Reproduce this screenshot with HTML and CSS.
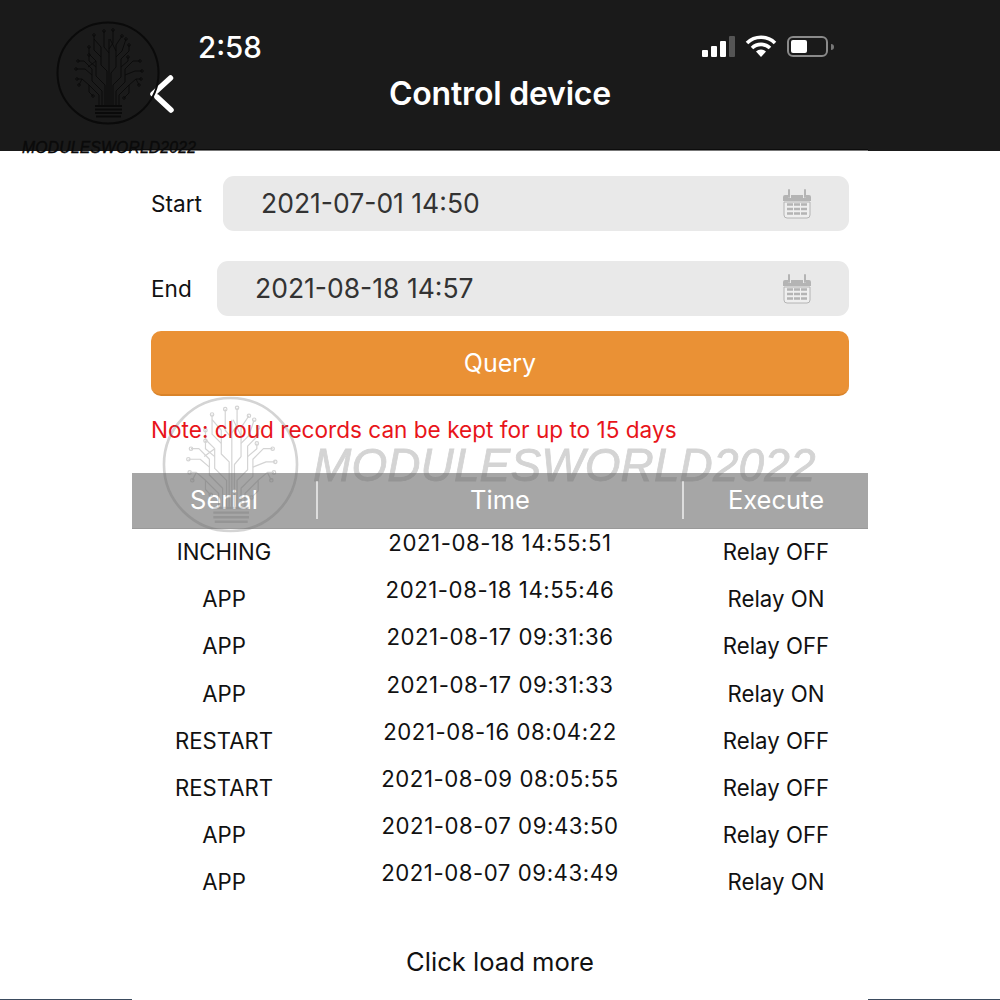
FILE: index.html
```html
<!DOCTYPE html>
<html lang="en">
<head>
<meta charset="utf-8">
<title>Control device</title>
<link rel="stylesheet" href="styles.css">
</head>
<body>
<svg class="defs" width="0" height="0" aria-hidden="true">
  <symbol id="logo" viewBox="0 0 104 104">
    <circle cx="52" cy="52" r="50.5" fill="none" stroke="currentColor" stroke-width="2"/>
    <g fill="none" stroke="currentColor" stroke-width="0.9" stroke-linejoin="round">
      <path d="M43 84V74L33 64L26 58H21M46 84V70L36 60V48L28 40H22M49 84V64L40 55V40L33 33V26M51 84V50L45 44V26L38 18M53 84V18"/>
      <path d="M55 84V52L60 46V24L66 15M57 84V64L65 56V38L73 30V24M60 84V70L69 61V48L77 40H84M63 84V74L73 64L80 58H85"/>
      <path d="M45 36L38 29V14M40 46L33 40V34M36 54L29 48H20M33 64V71L37 75M26 58L23 64M53 32L48 26V10M53 28L57 22V9"/>
      <path d="M60 36L66 30L70 18M65 46L72 40V36M69 54L79 50H86M73 64V72L68 77M80 58L83 64M40 40L32 46M60 30L54 18"/>
      <circle cx="21" cy="58" r="1.300"/><circle cx="22" cy="40" r="1.300"/><circle cx="33" cy="26" r="1.300"/><circle cx="38" cy="14" r="1.300"/>
      <circle cx="48" cy="10" r="1.300"/><circle cx="57" cy="9" r="1.300"/><circle cx="66" cy="15" r="1.300"/><circle cx="70" cy="18" r="1.300"/>
      <circle cx="73" cy="24" r="1.300"/><circle cx="84" cy="40" r="1.300"/><circle cx="86" cy="50" r="1.300"/><circle cx="85" cy="58" r="1.300"/>
      <circle cx="20" cy="48" r="1.300"/><circle cx="23" cy="64" r="1.300"/><circle cx="37" cy="75" r="1.300"/><circle cx="68" cy="77" r="1.300"/>
      <circle cx="83" cy="64" r="1.300"/><circle cx="33" cy="34" r="1.300"/><circle cx="72" cy="36" r="1.300"/>
    </g>
    <g fill="none" stroke="currentColor" stroke-width="1.800">
      <path d="M39 85H66M39 88.500H66M39 92H66M40 95.500H65"/>
    </g>
  </symbol>
  <symbol id="calendar" viewBox="0 0 28 30">
    <path d="M2 6H5V9H8V6H20V9H23V6H26A2 2 0 0 1 28 8V12H0V8A2 2 0 0 1 2 6Z" fill="currentColor"/>
    <path d="M6 1V8M22 1V8" stroke="currentColor" stroke-width="2" stroke-linecap="round"/>
    <path d="M1 13H27V26A3 3 0 0 1 24 29H4A3 3 0 0 1 1 26Z" fill="#efefef" stroke="currentColor" stroke-width="1"/>
    <path d="M4 15.500H10M11 15.500H17M18 15.500H24M4 20H10M11 20H17M18 20H24M4 24.500H10M11 24.500H17M18 24.500H24" stroke="currentColor" stroke-width="2.600"/>
  </symbol>
</svg>

<div class="page">
  <header class="top">
    <div class="status">
      <span class="clock">2:58</span>
      <div class="status-icons">
        <div class="signal">
          <i class="bar b1"></i><i class="bar b2"></i><i class="bar b3"></i><i class="bar b4"></i>
        </div>
        <svg class="wifi" viewBox="0 0 32 22" width="32" height="22">
          <path d="M2 8A20 20 0 0 1 30 8M7 13A13 13 0 0 1 25 13" fill="none" stroke="#fff" stroke-width="3.600"/>
          <path d="M11 16.500A7 7 0 0 1 21 16.500L16 22Z" fill="#fff"/>
        </svg>
        <div class="battery-wrap">
          <div class="battery"><div class="battery-fill"></div></div>
          <i class="battery-nub"></i>
        </div>
      </div>
    </div>
    <div class="nav">
      <div class="nav-left">
        <svg class="back" viewBox="0 0 26 38" width="26" height="38">
          <path d="M20.500 3L3 19M7 22L21 35" fill="none" stroke="#fff" stroke-width="5.500" stroke-linecap="round"/>
        </svg>
      </div>
      <h1 class="title">Control device</h1>
    </div>
  </header>

  <main class="content">
    <div class="form">
      <div class="date-row start-row">
        <label class="date-label">Start</label>
        <div class="date-field"><span>2021-07-01 14:50</span><svg class="cal"><use href="#calendar"/></svg></div>
      </div>
      <div class="date-row end-row">
        <label class="date-label">End</label>
        <div class="date-field"><span>2021-08-18 14:57</span><svg class="cal"><use href="#calendar"/></svg></div>
      </div>
      <button class="query">Query</button>
      <p class="note">Note: cloud records can be kept for up to 15 days</p>
    </div>

    <div class="table">
      <div class="thead">
        <div class="th">Serial</div>
        <div class="th sep">Time</div>
        <div class="th">Execute</div>
      </div>
      <div class="tr"><div class="td">INCHING</div><div class="td time">2021-08-18 14:55:51</div><div class="td">Relay OFF</div></div>
      <div class="tr"><div class="td">APP</div><div class="td time">2021-08-18 14:55:46</div><div class="td">Relay ON</div></div>
      <div class="tr"><div class="td">APP</div><div class="td time">2021-08-17 09:31:36</div><div class="td">Relay OFF</div></div>
      <div class="tr"><div class="td">APP</div><div class="td time">2021-08-17 09:31:33</div><div class="td">Relay ON</div></div>
      <div class="tr"><div class="td">RESTART</div><div class="td time">2021-08-16 08:04:22</div><div class="td">Relay OFF</div></div>
      <div class="tr"><div class="td">RESTART</div><div class="td time">2021-08-09 08:05:55</div><div class="td">Relay OFF</div></div>
      <div class="tr"><div class="td">APP</div><div class="td time">2021-08-07 09:43:50</div><div class="td">Relay OFF</div></div>
      <div class="tr"><div class="td">APP</div><div class="td time">2021-08-07 09:43:49</div><div class="td">Relay ON</div></div>
    </div>

    <div class="more">Click load more</div>
  </main>

  <footer class="foot"><i class="foot-line"></i><i class="foot-line"></i></footer>

  <div class="mark mark-small">
    <svg class="mark-logo"><use href="#logo"/></svg>
    <span class="mark-text">MODULESWORLD2022</span>
  </div>
  <div class="mark mark-large">
    <svg class="mark-logo"><use href="#logo"/></svg>
    <span class="mark-text">MODULESWORLD2022</span>
  </div>
</div>
</body>
</html>
```

FILE: styles.css
```css
* { box-sizing: border-box; }
html, body { margin: 0; padding: 0; background: #fff; }
body { font-family: Inter, "Liberation Sans", sans-serif; color: #111; overflow: hidden; }
.defs { position: absolute; }
.page { position: relative; width: 1000px; height: 1000px; display: flex; flex-direction: column; overflow: hidden; }

.top { height: 151px; flex: none; background: #1a1a1a; color: #fff; }
.status { height: 73px; display: flex; align-items: flex-end; justify-content: space-between; padding: 0 166px 8px 198px; }
.clock { font-size: 29.500px; font-weight: 500; line-height: 36px; }
.status-icons { display: flex; align-items: flex-end; gap: 10px; height: 22px; margin-bottom: 8px; }
.signal { display: flex; align-items: flex-end; gap: 3px; height: 22px; }
.bar { display: block; width: 6px; background: #fff; border-radius: 1px; }
.b1 { height: 7px; }
.b2 { height: 11px; }
.b3 { height: 16px; }
.b4 { height: 21px; background: #555; }
.battery-wrap { display: flex; align-items: center; gap: 3px; }
.battery { width: 41px; height: 21px; border: 2px solid #8a8a8a; border-radius: 6px; padding: 2px; }
.battery-fill { width: 16px; height: 100%; background: #fff; border-radius: 2px; }
.battery-nub { display: block; width: 3px; height: 6px; background: #777; border-radius: 0 3px 3px 0; }

.nav { display: grid; grid-template-columns: 1fr auto 1fr; align-items: center; height: 42px; }
.nav-left { padding-left: 150px; display: flex; }
.back { display: block; }
.title { margin: 0; font-size: 32px; line-height: 42px; font-weight: 600; letter-spacing: -0.2px; }

.content { width: 736px; margin: -1px auto 0; flex: 1; display: flex; flex-direction: column; border-top: 1px solid #777; box-shadow: 0 -1px 0 #0c0c0c; }
.form { padding: 25px 19px 0; }
.date-row { display: flex; align-items: center; height: 55px; }
.end-row { margin-top: 30px; }
.date-label { font-size: 22.600px; flex: none; padding-bottom: 1px; }
.start-row .date-label { width: 72px; }
.end-row .date-label { width: 66px; }
.date-field { flex: 1; height: 55px; background: #e9e9e9; border-radius: 11px; display: flex; align-items: center; justify-content: space-between; padding: 0 38px; font-size: 26.500px; color: #333; }
.date-field span { padding-bottom: 2px; }
.cal { width: 28px; height: 30px; color: #b4b4b4; flex: none; }
.query { display: block; width: 100%; height: 65px; margin-top: 15px; border: 0; border-bottom: 2px solid #d98329; border-radius: 10px; background: #ea9135; color: #fff; font: 400 25px Inter, "Liberation Sans", sans-serif; }
.note { margin: 20px 0 0; font-size: 22.600px; line-height: 28px; color: #e8141a; white-space: nowrap; }

.table { margin-top: 29px; }
.thead { display: grid; grid-template-columns: 184px 368px 184px; height: 55.500px; background: #a6a6a6; border-bottom: 1px solid #999; align-items: center; }
.th { color: #fff; font-size: 25.500px; text-align: center; height: 38px; line-height: 38px; }
.sep { border-left: 2px solid #ddd; border-right: 2px solid #ddd; }
.tr { display: grid; grid-template-columns: 184px 368px 184px; height: 47.200px; align-items: center; }
.td { font-size: 22.200px; text-align: center; line-height: 28px; color: #111; }
.time { padding-bottom: 18px; letter-spacing: 0.55px; }
.more { margin-top: 37px; font-size: 25.600px; line-height: 38px; text-align: center; color: #111; }

.foot { height: 1px; display: flex; justify-content: space-between; flex: none; margin-top: auto; }
.foot-line { display: block; width: 132px; height: 1px; background: #3b4b5e; }

.mark { position: absolute; pointer-events: none; }
.mark-logo { display: block; }
.mark-text { position: absolute; font-family: "Liberation Sans", sans-serif; font-style: italic; white-space: nowrap; }
.mark-small { left: 56px; top: 21px; color: #0a0a0a; }
.mark-small .mark-logo { width: 104px; height: 104px; }
.mark-small .mark-text { left: -34px; top: 119px; font-size: 15.700px; line-height: 16px; letter-spacing: 0.2px; -webkit-text-stroke: 0.4px #0a0a0a; }
.mark-large { left: 162px; top: 396px; color: #6e6e6e; opacity: 0.3; }
.mark-large .mark-logo { width: 137px; height: 137px; }
.mark-large .mark-text { left: 151px; top: 43px; font-size: 46px; line-height: 52px; letter-spacing: 0.1px; -webkit-text-stroke: 0.8px #6e6e6e; }
```
